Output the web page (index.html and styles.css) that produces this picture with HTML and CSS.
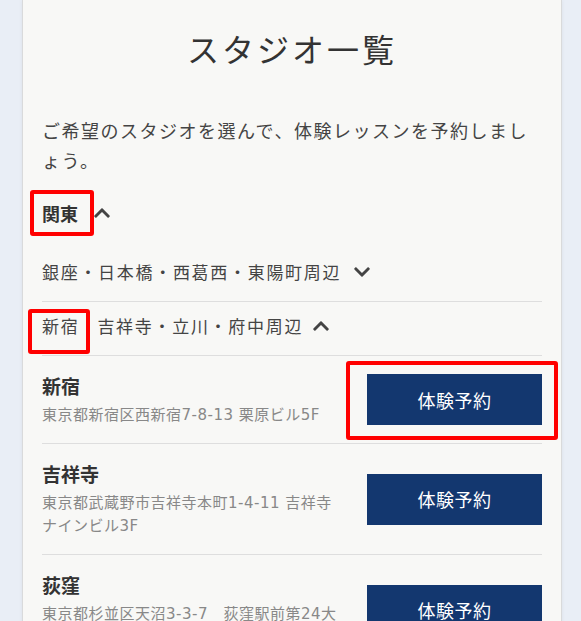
FILE: index.html
```html
<!DOCTYPE html>
<html lang="ja">
<head>
<meta charset="utf-8">
<title>スタジオ一覧</title>
<link rel="stylesheet" href="styles.css">
</head>
<body>
<div class="page">
  <main class="card">
    <h1 class="title">スタジオ一覧</h1>
    <p class="lead">ご希望のスタジオを選んで、体験レッスンを予約しましょう。</p>
    <section class="area">
      <h2 class="area-head">
        <span class="mark mark-kanto">関東</span>
        <svg class="chev" viewBox="0 120 448 272" width="16" height="10"><path d="M240.971 130.524l194.343 194.343c9.373 9.373 9.373 24.569 0 33.941l-22.667 22.667c-9.357 9.357-24.522 9.375-33.901.04L224 227.495 69.255 381.516c-9.379 9.335-24.544 9.317-33.901-.04l-22.667-22.667c-9.373-9.373-9.373-24.569 0-33.941L207.03 130.525c9.372-9.373 24.568-9.373 33.941-.001z"/></svg>
      </h2>
      <div class="region">
        <span>銀座・日本橋・西葛西・東陽町周辺</span>
        <svg class="chev" viewBox="0 120 448 272" width="16" height="10"><path d="M207.029 381.476L12.686 187.132c-9.373-9.373-9.373-24.569 0-33.941l22.667-22.667c9.357-9.357 24.522-9.375 33.901-.04L224 284.505l154.745-154.021c9.379-9.335 24.544-9.317 33.901.04l22.667 22.667c9.373 9.373 9.373 24.569 0 33.941L240.971 381.476c-9.373 9.372-24.569 9.372-33.942 0z"/></svg>
      </div>
      <div class="region region-tight">
        <span class="mark mark-shinjuku">新宿</span>
        <span>吉祥寺・立川・府中周辺</span>
        <svg class="chev" viewBox="0 120 448 272" width="16" height="10"><path d="M240.971 130.524l194.343 194.343c9.373 9.373 9.373 24.569 0 33.941l-22.667 22.667c-9.357 9.357-24.522 9.375-33.901.04L224 227.495 69.255 381.516c-9.379 9.335-24.544 9.317-33.901-.04l-22.667-22.667c-9.373-9.373-9.373-24.569 0-33.941L207.03 130.525c9.372-9.373 24.568-9.373 33.941-.001z"/></svg>
      </div>
      <ul class="studios">
        <li class="studio">
          <div class="info">
            <div class="name">新宿</div>
            <div class="addr">東京都新宿区西新宿7-8-13 栗原ビル5F</div>
          </div>
          <a class="btn mark mark-btn" href="#">体験予約</a>
        </li>
        <li class="studio">
          <div class="info">
            <div class="name">吉祥寺</div>
            <div class="addr">東京都武蔵野市吉祥寺本町1-4-11 吉祥寺ナインビル3F</div>
          </div>
          <a class="btn" href="#">体験予約</a>
        </li>
        <li class="studio">
          <div class="info">
            <div class="name">荻窪</div>
            <div class="addr">東京都杉並区天沼3-3-7　荻窪駅前第24大京ビル2F</div>
          </div>
          <a class="btn" href="#">体験予約</a>
        </li>
      </ul>
    </section>
  </main>
</div>
</body>
</html>
```

FILE: styles.css
```css
* { box-sizing: border-box; }
html, body { margin: 0; padding: 0; }
body {
  background: #e9eef6;
  font-family: "Noto Sans CJK JP", "Noto Sans", sans-serif;
  color: #333;
}
.page {
  padding-left: 22px;
}
.card {
  width: 540px;
  min-height: 100vh;
  background: #f8f8f6;
  border-left: 1px solid #d9dadb;
  border-right: 1px solid #d9dadb;
  box-shadow: 0 0 4px rgba(0,0,0,0.06);
  padding: 26px 19px 0;
}
.title {
  margin: 0;
  text-align: center;
  font-size: 32px;
  line-height: 44px;
  font-weight: 400;
  letter-spacing: 3px;
  color: #333;
}
.lead {
  margin: 45px 0 0;
  font-size: 18px;
  line-height: 30px;
  letter-spacing: 1.5px;
  color: #444;
}
.area-head {
  margin: 24px 0 21px;
  display: flex;
  align-items: center;
  gap: 16px;
  font-size: 18px;
  line-height: 28px;
  font-weight: 700;
  color: #333;
}
.chev { fill: #444; display: block; }
.region {
  display: flex;
  align-items: center;
  gap: 13px;
  padding: 10px 0 15px;
  border-bottom: 1px solid #dedede;
  font-size: 17px;
  line-height: 28px;
  letter-spacing: 1.7px;
  color: #444;
}
.region-tight { gap: 10px; }
.region .mark-shinjuku { margin-right: 8px; }
.mark { position: relative; }
.mark::after {
  content: "";
  position: absolute;
  border: 4px solid #f00;
  border-radius: 3px;
  pointer-events: none;
}
.mark-kanto::after { top: -9px; left: -12px; right: -16px; bottom: -9px; }
.mark-shinjuku::after { top: -3px; left: -14px; right: -11px; bottom: -14px; }
.mark-btn::after { top: -13px; left: -21px; right: -16px; bottom: -15px; }
.studios { list-style: none; margin: 0; padding: 0; }
.studio {
  display: flex;
  align-items: center;
  gap: 25px;
  padding: 16px 0;
  border-bottom: 1px solid #dedede;
}
.info { flex: 1; min-width: 0; }
.name {
  font-size: 19px;
  line-height: 28px;
  font-weight: 700;
  color: #333;
}
.addr {
  margin-top: 4px;
  font-family: "DejaVu Sans", "Noto Sans CJK JP", sans-serif;
  font-size: 15px;
  line-height: 23px;
  letter-spacing: 0.5px;
  color: #888;
}
.btn {
  flex: 0 0 175px;
  height: 51px;
  display: flex;
  align-items: center;
  justify-content: center;
  background: #13376f;
  color: #fff;
  font-size: 18px;
  letter-spacing: 0.5px;
  text-decoration: none;
}
```
